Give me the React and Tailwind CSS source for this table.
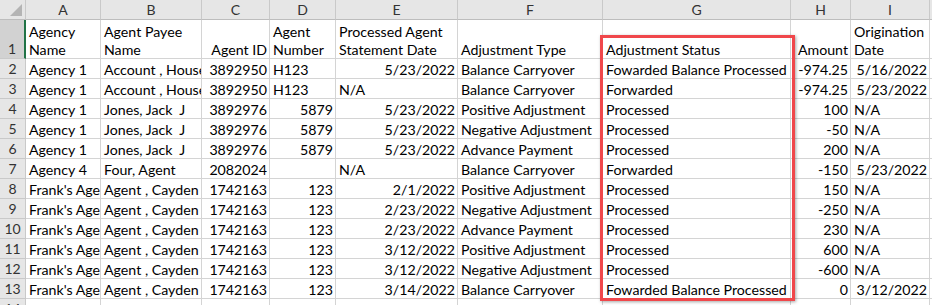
import React from "react";

const cols = ["A", "B", "C", "D", "E", "F", "G", "H", "I"];

// align: l = left, r = right
const L = (t) => ({ t, a: "l" });
const R = (t) => ({ t, a: "r" });

const rows = [
  [L("Agency 1"), L("Account , House"), R("3892950"), L("H123"), R("5/23/2022"), L("Balance Carryover"), L("Fowarded Balance Processed"), R("-974.25"), R("5/16/2022")],
  [L("Agency 1"), L("Account , House"), R("3892950"), L("H123"), L("N/A"), L("Balance Carryover"), L("Forwarded"), R("-974.25"), R("5/23/2022")],
  [L("Agency 1"), L("Jones, Jack\u00a0 J"), R("3892976"), R("5879"), R("5/23/2022"), L("Positive Adjustment"), L("Processed"), R("100"), L("N/A")],
  [L("Agency 1"), L("Jones, Jack\u00a0 J"), R("3892976"), R("5879"), R("5/23/2022"), L("Negative Adjustment"), L("Processed"), R("-50"), L("N/A")],
  [L("Agency 1"), L("Jones, Jack\u00a0 J"), R("3892976"), R("5879"), R("5/23/2022"), L("Advance Payment"), L("Processed"), R("200"), L("N/A")],
  [L("Agency 4"), L("Four, Agent"), R("2082024"), L(""), L("N/A"), L("Balance Carryover"), L("Forwarded"), R("-150"), R("5/23/2022")],
  [L("Frank's Agency"), L("Agent , Cayden"), R("1742163"), R("123"), R("2/1/2022"), L("Positive Adjustment"), L("Processed"), R("150"), L("N/A")],
  [L("Frank's Agency"), L("Agent , Cayden"), R("1742163"), R("123"), R("2/23/2022"), L("Negative Adjustment"), L("Processed"), R("-250"), L("N/A")],
  [L("Frank's Agency"), L("Agent , Cayden"), R("1742163"), R("123"), R("2/23/2022"), L("Advance Payment"), L("Processed"), R("230"), L("N/A")],
  [L("Frank's Agency"), L("Agent , Cayden"), R("1742163"), R("123"), R("3/12/2022"), L("Positive Adjustment"), L("Processed"), R("600"), L("N/A")],
  [L("Frank's Agency"), L("Agent , Cayden"), R("1742163"), R("123"), R("3/12/2022"), L("Negative Adjustment"), L("Processed"), R("-600"), L("N/A")],
  [L("Frank's Agency"), L("Agent , Cayden"), R("1742163"), R("123"), R("3/14/2022"), L("Balance Carryover"), L("Fowarded Balance Processed"), R("0"), R("3/12/2022")],
  [L("Frank's Agency"), L("Agent , Cayden"), R("1742163"), R("123"), R("3/14/2022"), L("Balance Carryover"), L("Fowarded Balance Processed"), R("0"), R("3/12/2022")],
];

const header1 = [
  ["Agency", "Name"],
  ["Agent Payee", "Name"],
  ["", "Agent ID"],
  ["Agent", "Number"],
  ["Processed Agent", "Statement Date"],
  ["", "Adjustment Type"],
  ["", "Adjustment Status"],
  ["", "Amount"],
  ["Origination", "Date"],
];
const header1Align = ["l", "l", "r", "l", "l", "l", "l", "r", "l"];

function ColHead({ label }) {
  return (
    <div className="flex items-center justify-center border-r border-b border-r-[#c9c9c9] border-b-[#bdbdbd] bg-[#e6e6e6] text-[14px] text-[#333]">
      {label}
    </div>
  );
}

function RowHead({ n, selected }) {
  return (
    <div
      className={
        selected
          ? "flex items-end justify-center border-r-2 border-b border-r-[#217346] border-b-[#c9c9c9] bg-[#d2d2d2] pb-[1px] text-[14px] leading-[17px] text-[#333]"
          : "flex items-end justify-center border-r border-b border-r-[#c9c9c9] border-b-[#c9c9c9] bg-[#e6e6e6] pb-[1px] text-[14px] leading-[17px] text-[#333]"
      }
    >
      {n}
    </div>
  );
}

function Cell({ t, a }) {
  return (
    <div
      className={
        a === "r"
          ? "flex items-end justify-end overflow-hidden whitespace-nowrap border-r border-b border-[#d4d4d4] bg-white pr-[2px] leading-[17px]"
          : "flex items-end justify-start overflow-hidden whitespace-nowrap border-r border-b border-[#d4d4d4] bg-white pl-[3px] leading-[17px]"
      }
    >
      {t}
    </div>
  );
}

export default function App() {
  return (
    <div className="relative h-[305px] w-[932px] overflow-hidden bg-white font-[Lato,sans-serif] text-[14.2px] text-black">
      <div className="grid grid-cols-[26px_75px_101px_68px_66px_122px_145px_188px_60px_79px_1fr] grid-rows-[20px_39px_repeat(13,20px)]">
        {/* corner */}
        <div className="relative border-r border-b border-r-[#c9c9c9] border-b-[#bdbdbd] bg-[#e6e6e6]">
          <svg className="absolute right-[3px] bottom-[3px]" width="12" height="12" viewBox="0 0 12 12">
            <polygon points="12,0 12,12 0,12" fill="#b4b4b4" />
          </svg>
        </div>
        {cols.map((c) => (
          <ColHead key={c} label={c} />
        ))}
        <ColHead label="" />

        {/* row 1 */}
        <RowHead n={1} selected />
        {header1.map((lines, i) => (
          <div
            key={i}
            className={
              header1Align[i] === "r"
                ? "flex flex-col items-end justify-end overflow-hidden whitespace-nowrap border-r border-b border-[#d4d4d4] bg-white pr-[2px] leading-[19px]"
                : "flex flex-col items-start justify-end overflow-hidden whitespace-nowrap border-r border-b border-[#d4d4d4] bg-white pl-[3px] leading-[19px]"
            }
          >
            {lines[0] ? <span>{lines[0]}</span> : null}
            <span className="leading-[17px]">{lines[1]}</span>
          </div>
        ))}
        <Cell t="" a="l" />

        {rows.map((r, ri) => (
          <React.Fragment key={ri}>
            <RowHead n={ri + 2} />
            {r.map((c, ci) => (
              <Cell key={ci} t={c.t} a={c.a} />
            ))}
            <Cell t="" a="l" />
          </React.Fragment>
        ))}
      </div>

      {/* red highlight box */}
      <div className="pointer-events-none absolute left-[600px] top-[35px] h-[266px] w-[195px] border-[3px] border-[#f0474b] shadow-[1px_1px_3px_rgba(0,0,0,0.35)]" />
    </div>
  );
}
